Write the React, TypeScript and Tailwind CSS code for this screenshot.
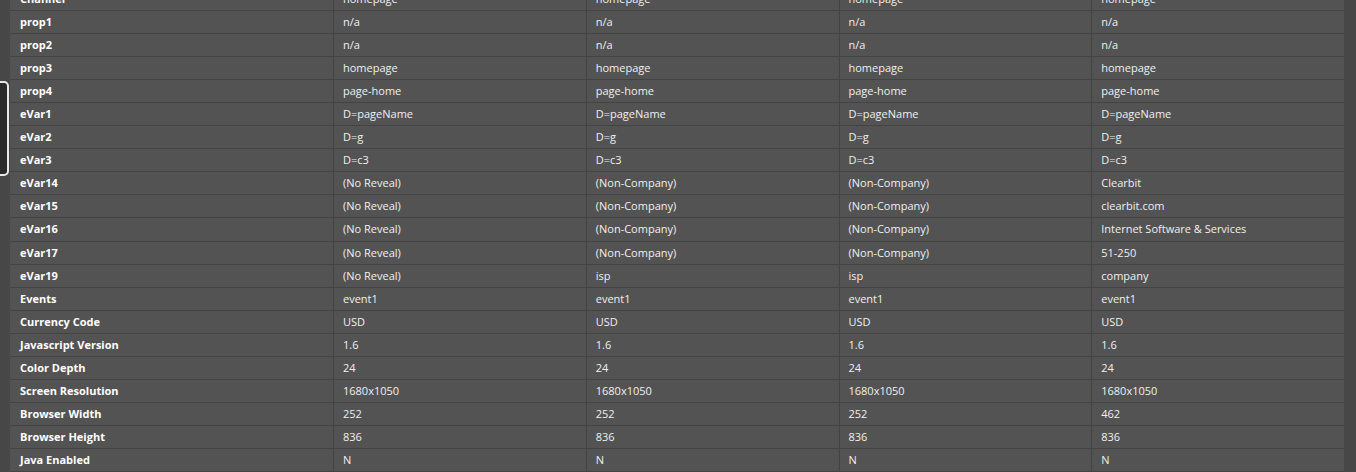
const rows: [string, string[]][] = [
  ["Channel", ["homepage", "homepage", "homepage", "homepage"]],
  ["prop1", ["n/a", "n/a", "n/a", "n/a"]],
  ["prop2", ["n/a", "n/a", "n/a", "n/a"]],
  ["prop3", ["homepage", "homepage", "homepage", "homepage"]],
  ["prop4", ["page-home", "page-home", "page-home", "page-home"]],
  ["eVar1", ["D=pageName", "D=pageName", "D=pageName", "D=pageName"]],
  ["eVar2", ["D=g", "D=g", "D=g", "D=g"]],
  ["eVar3", ["D=c3", "D=c3", "D=c3", "D=c3"]],
  ["eVar14", ["(No Reveal)", "(Non-Company)", "(Non-Company)", "Clearbit"]],
  ["eVar15", ["(No Reveal)", "(Non-Company)", "(Non-Company)", "clearbit.com"]],
  ["eVar16", ["(No Reveal)", "(Non-Company)", "(Non-Company)", "Internet Software & Services"]],
  ["eVar17", ["(No Reveal)", "(Non-Company)", "(Non-Company)", "51-250"]],
  ["eVar19", ["(No Reveal)", "isp", "isp", "company"]],
  ["Events", ["event1", "event1", "event1", "event1"]],
  ["Currency Code", ["USD", "USD", "USD", "USD"]],
  ["Javascript Version", ["1.6", "1.6", "1.6", "1.6"]],
  ["Color Depth", ["24", "24", "24", "24"]],
  ["Screen Resolution", ["1680x1050", "1680x1050", "1680x1050", "1680x1050"]],
  ["Browser Width", ["252", "252", "252", "462"]],
  ["Browser Height", ["836", "836", "836", "836"]],
  ["Java Enabled", ["N", "N", "N", "N"]],
];

export default function App() {
  return (
    <div className="w-[1356px] h-[472px] overflow-hidden bg-[#474747] flex relative" style={{ fontFamily: '"Open Sans", sans-serif' }}>
      <div className="absolute left-[-4px] top-[81px] w-[13px] h-[95px] rounded-[5px] border-2 border-[#e8e8e8] bg-[#2a2a2a]" />
      <div className="w-[10px] shrink-0" />
      <div className="w-[1334px] mt-[-12px] flex flex-col">
        {rows.map(([label, vals]) => (
          <div key={label} className="flex h-[23.2px] bg-[#535353] border-b border-[#434343] text-[11px] text-[#f0f0f0] leading-[21px]">
            <div className="w-[323px] pl-[10px] font-bold text-white">{label}</div>
            {vals.map((v, i) => (
              <div key={i} className="w-[252.75px] border-l border-[#434343] pl-[9px]">{v}</div>
            ))}
          </div>
        ))}
      </div>
    </div>
  );
}
